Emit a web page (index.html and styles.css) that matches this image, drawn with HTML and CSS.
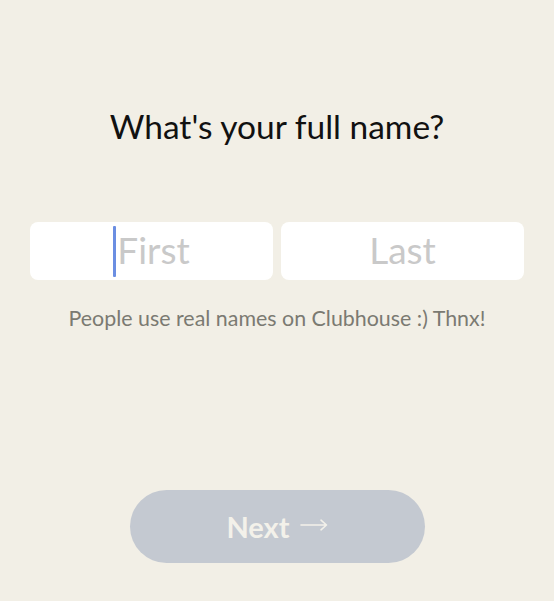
FILE: index.html
```html
<!DOCTYPE html>
<html lang="en">
<head>
<meta charset="utf-8">
<title>Full name</title>
<link rel="stylesheet" href="styles.css">
</head>
<body>
<main class="screen">
  <h1 class="title">What's your full name?</h1>
  <div class="fields">
    <div class="field field-first"><span class="caret"></span><span class="placeholder">First</span></div>
    <div class="field"><span class="placeholder">Last</span></div>
  </div>
  <p class="hint">People use real names on Clubhouse :) Thnx!</p>
  <div class="actions">
    <button class="next" type="button">Next<svg class="arrow" width="28" height="12" viewBox="0 0 28 12"><path d="M1 6H26.5M21 1.2L26.5 6L21 10.8" fill="none" stroke="currentColor" stroke-width="1.6" stroke-linecap="round" stroke-linejoin="round"/></svg></button>
  </div>
</main>
</body>
</html>
```
FILE: styles.css
```css
html, body {
  margin: 0;
  padding: 0;
  background: #f2efe6;
}
body {
  font-family: "Lato", "Noto Sans", sans-serif;
  width: 554px;
  height: 601px;
  overflow: hidden;
}
.screen {
  display: flex;
  flex-direction: column;
  align-items: stretch;
  padding: 0 30px;
}
.title {
  margin: 103px 0 0;
  text-align: center;
  font-weight: 400;
  font-size: 33.5px;
  line-height: 46px;
  color: #111;
}
.fields {
  display: flex;
  gap: 8px;
  margin-top: 73px;
}
.field {
  flex: 1;
  height: 58px;
  background: #fff;
  border-radius: 8px;
  display: flex;
  align-items: center;
  justify-content: center;
}
.placeholder {
  font-size: 37px;
  color: #c9c9c9;
  line-height: 1;
  padding-bottom: 3px;
}
.caret {
  width: 3px;
  height: 51px;
  background: #6b8ee2;
  border-radius: 1px;
  margin-right: 1px;
}
.hint {
  margin: 24px 0 0;
  text-align: center;
  font-size: 21.4px;
  line-height: 28px;
  color: #7b7a72;
}
.actions {
  display: flex;
  justify-content: center;
  margin-top: 158px;
}
.next {
  width: 295px;
  height: 73px;
  border: 0;
  border-radius: 37px;
  background: #c4c9d1;
  color: #f3f1ea;
  font-family: inherit;
  font-size: 29px;
  font-weight: 700;
  padding: 0;
  display: flex;
  align-items: center;
  justify-content: center;
  gap: 10px;
}
.arrow {
  display: block;
  margin-top: -4px;
}
```
